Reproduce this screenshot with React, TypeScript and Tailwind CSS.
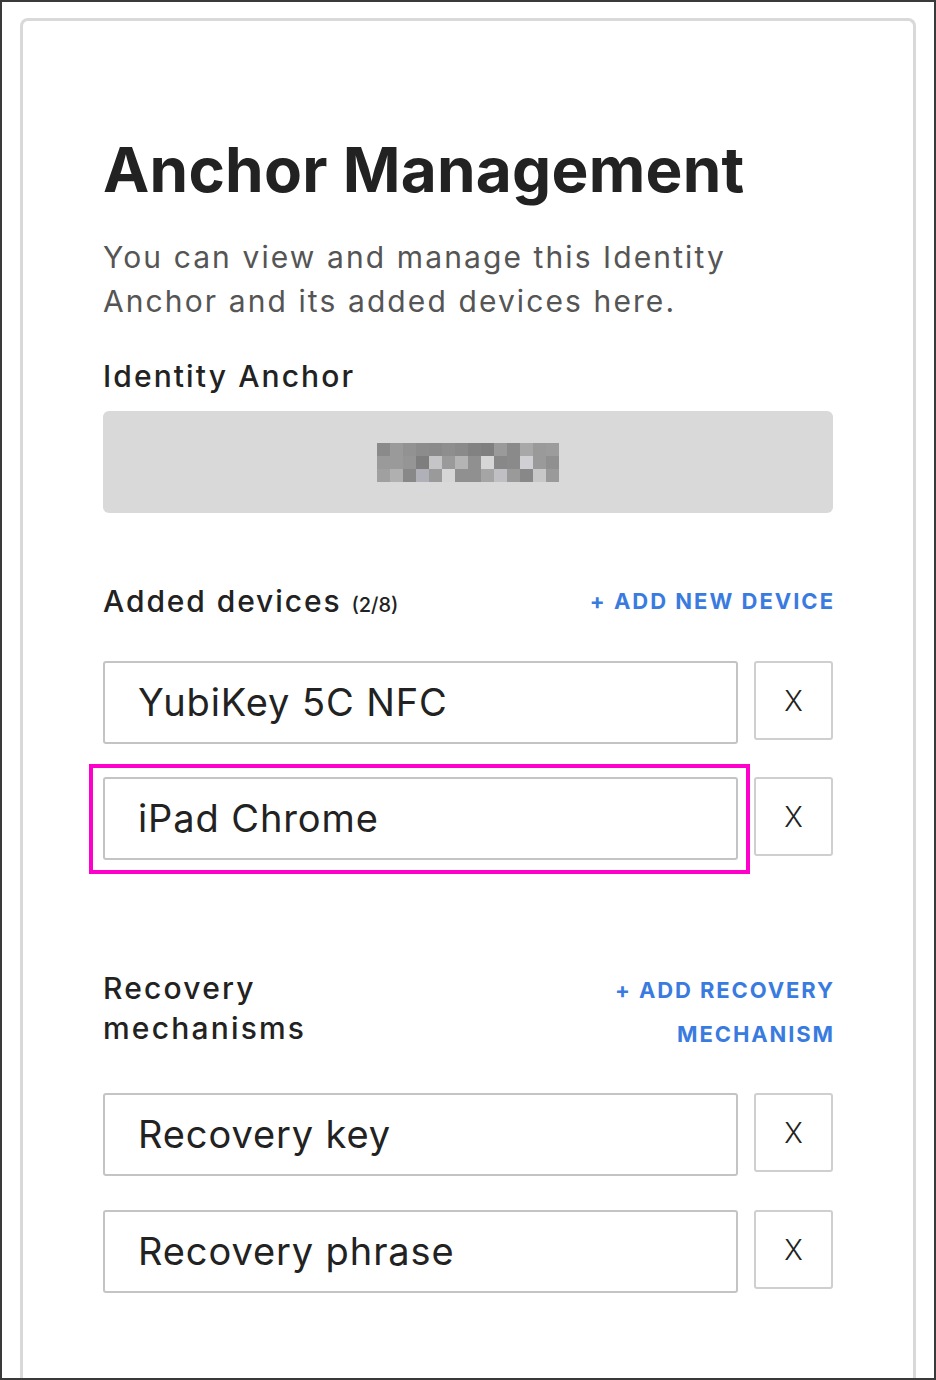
import React from 'react';

const font = { fontFamily: 'Inter, "Noto Sans", sans-serif' };

// blurred anchor number, 14 x 3 mosaic cells
const mosaic = [
  ['#8a8a8a', '#9a9a9a', '#929292', '#8c8c8c', '#8a8a8a', '#8e8e8e', '#8a8a8a', '#828282', '#7f7f7f', '#9a9a9a', '#8a8a8a', '#a8a8a8', '#9a9a9a', '#9c9c9c'],
  ['#9a9a9a', '#9a9a9a', '#959595', '#7e7e7e', '#c5c5c7', '#9a9a9a', '#b4b4b4', '#909090', '#d6d6d6', '#888888', '#8a8a8a', '#d0d0d4', '#9a9a9a', '#909090'],
  ['#a0a0a0', '#b0b0b0', '#888888', '#b0b0b8', '#9a9a9a', '#d6d6d6', '#909090', '#909090', '#a5a5a5', '#c0c0c4', '#9a9a9a', '#888888', '#c8c8c8', '#9a9a9a'],
];

function Row({ label, highlight }: { label: string; highlight?: boolean }) {
  return (
    <div className="relative flex items-start gap-4">
      <div className="flex h-[83px] flex-1 items-center rounded-[3px] border-2 border-[#c4c4c4] pl-[33px] text-[38px] tracking-[0.9px] text-[#222]">
        {label}
      </div>
      <button className="flex h-[79px] w-[79px] items-center justify-center rounded-[3px] border-2 border-[#cfcfcf] text-[28px] font-light text-[#222]">
        X
      </button>
      {highlight && (
        <div className="pointer-events-none absolute left-[-14px] top-[-13px] h-[110px] w-[661px] border-4 border-[#ff00cc]" />
      )}
    </div>
  );
}

export default function App() {
  return (
    <div className="h-[1380px] w-[936px] overflow-hidden border-2 border-[#3a3a3a] bg-white" style={font}>
      <div className="mx-[18px] mt-[16px] h-[1400px] rounded-t-lg border-[3px] border-b-0 border-[#d9d9d9] px-[80px] pt-[109px]">
        <h1 className="text-[62px] font-bold leading-[80px] tracking-[0.25px] text-[#222]">Anchor Management</h1>
        <p className="mt-[25px] text-[30px] leading-[44px] tracking-[2.1px] text-[#555]">
          You can view and manage this Identity<br />
          Anchor and its added devices here.
        </p>
        <h2 className="mt-[33px] text-[30px] font-medium leading-[40px] tracking-[2.1px] text-[#222]">Identity Anchor</h2>
        <div className="mt-[15px] flex h-[102px] items-center justify-center rounded-md bg-[#d9d9d9]">
          <div className="grid grid-cols-[repeat(14,13px)] grid-rows-[repeat(3,13px)]">
            {mosaic.flat().map((c, i) => (
              <div key={i} style={{ backgroundColor: c }} />
            ))}
          </div>
        </div>

        <div className="mt-[68px] flex h-[40px] items-center justify-between">
          <h2 className="text-[30px] font-medium tracking-[1.9px] text-[#222]">
            Added devices <span className="text-[20px] tracking-normal">(2/8)</span>
          </h2>
          <a className="-mr-[2px] text-[22px] font-bold uppercase tracking-[2px] text-[#3a7be0]">+ Add new device</a>
        </div>

        <div className="mt-[40px] flex flex-col gap-[33px]">
          <Row label="YubiKey 5C NFC" />
          <Row label="iPad Chrome" highlight />
        </div>

        <div className="mt-[108px] flex items-start justify-between">
          <h2 className="text-[30px] font-medium leading-[40px] tracking-[2.2px] text-[#222]">
            Recovery<br />mechanisms
          </h2>
          <a className="-mr-[2px] text-right text-[22px] font-bold uppercase leading-[44px] tracking-[1.9px] text-[#3a7be0]">
            + Add recovery<br />mechanism
          </a>
        </div>

        <div className="mt-[37px] flex flex-col gap-[34px]">
          <Row label="Recovery key" />
          <Row label="Recovery phrase" />
        </div>
      </div>
    </div>
  );
}
